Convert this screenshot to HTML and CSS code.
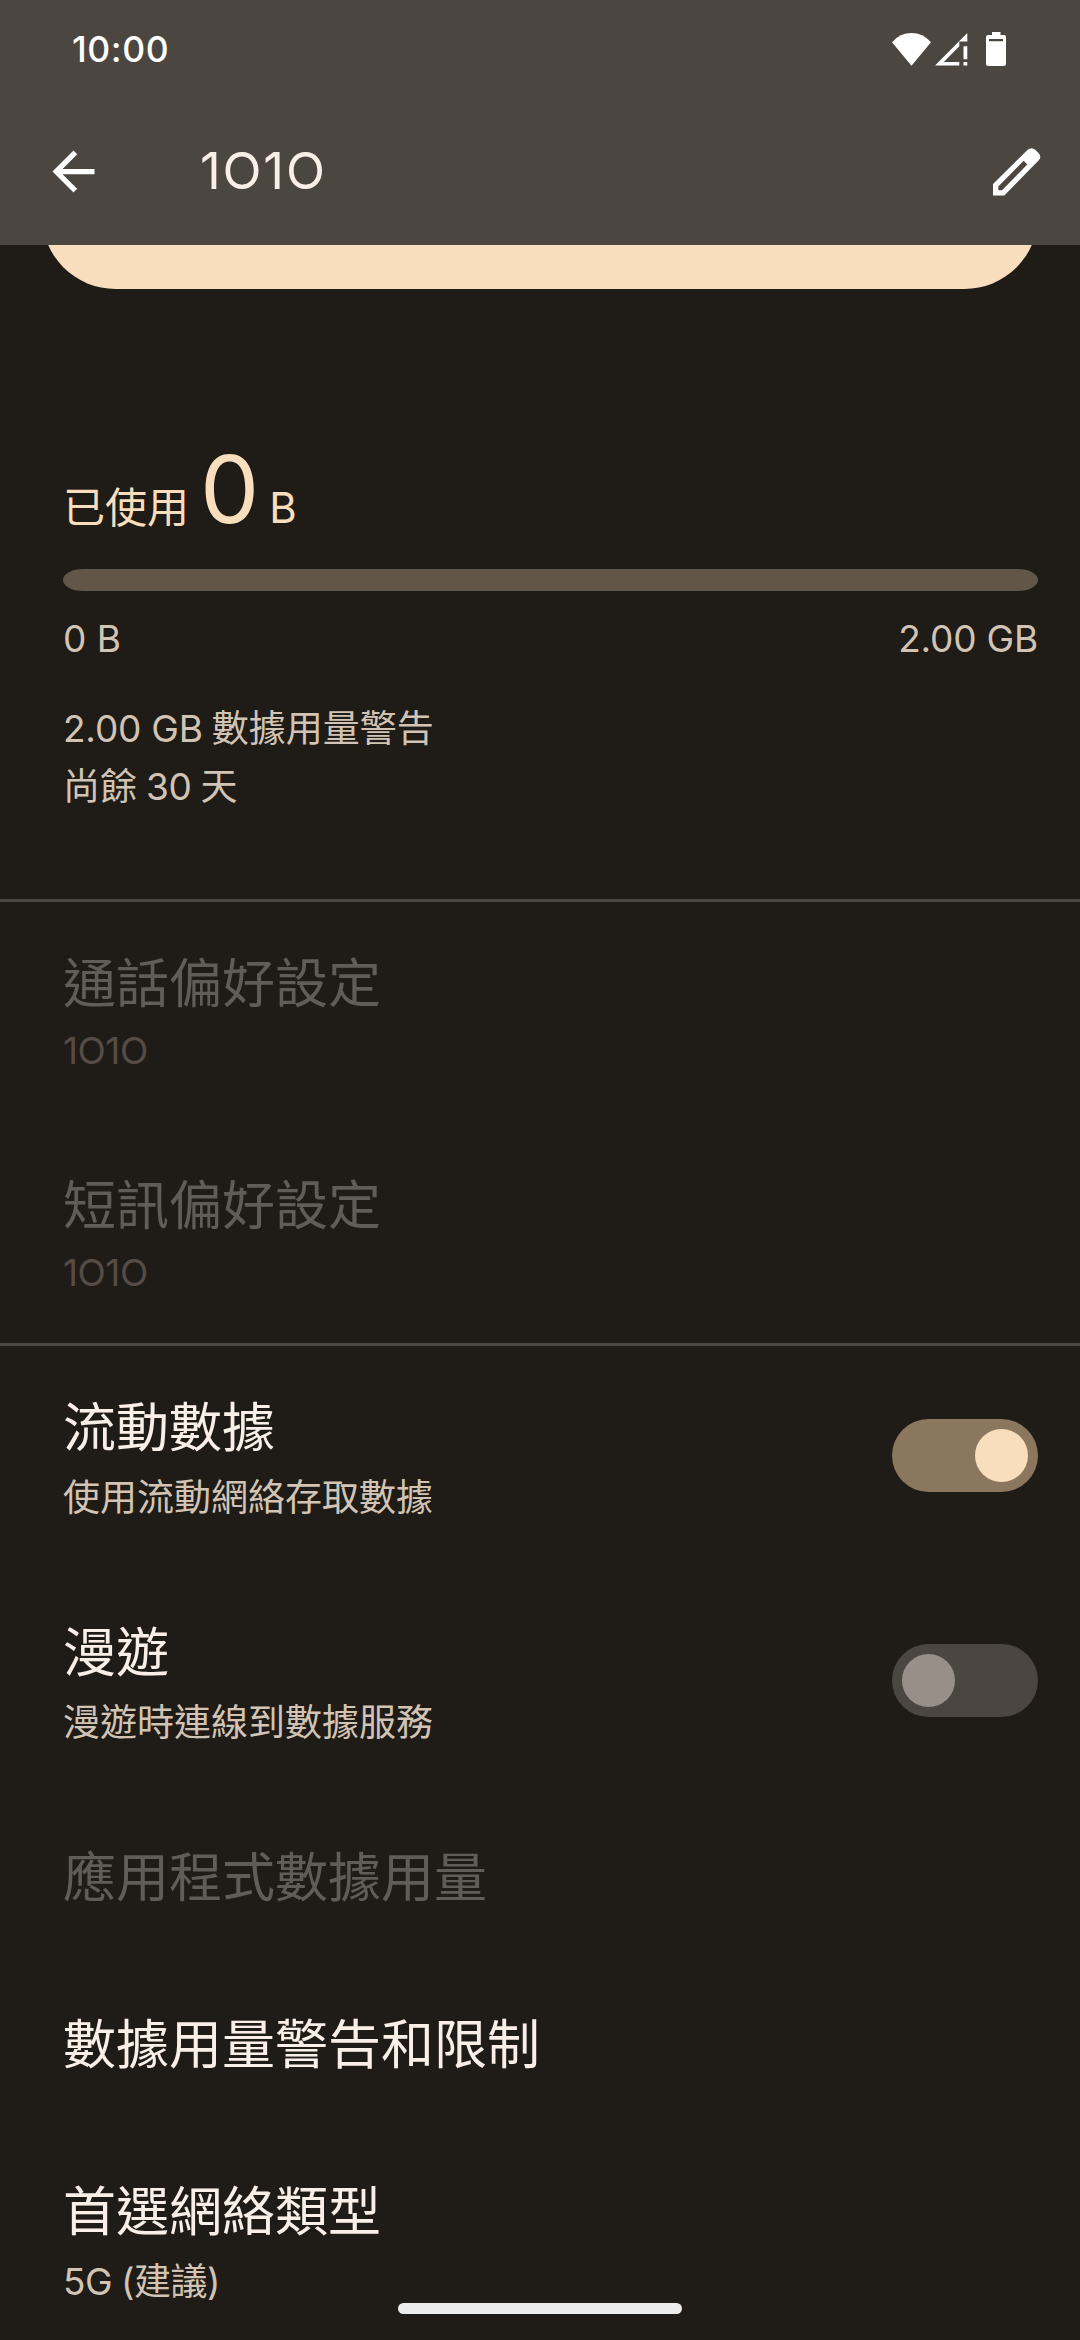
FILE: index.html
```html
<!DOCTYPE html>
<html lang="zh-Hant-HK">
<head>
<meta charset="utf-8">
<title>1O1O</title>
<link rel="stylesheet" href="styles.css">
</head>
<body>
<div class="screen">
  <header class="header">
    <div class="status">
      <span class="clock">10:00</span>
      <div class="status-icons">
        <svg class="wifi" width="39" height="33" viewBox="0 0 39 33"><path d="M0 9.2Q8 0 19.5 0T39 9.2L19.5 32.7Z" fill="#fff"/></svg>
        <svg class="signal" width="33" height="33" viewBox="0 0 33 33"><path d="M32.3 0V8.5H24.3V13.3L8.8 29H24.3V32.6H0ZM28.5 13.3H32.3V26.2H28.5ZM28.5 29H32.3V32.6H28.5Z" fill="#fff"/></svg>
        <svg class="battery" width="20" height="34" viewBox="0 0 20 34"><path fill-rule="evenodd" d="M6 0H14.5V3H18Q20 3 20 5V32Q20 34 18 34H2Q0 34 0 32V5Q0 3 2 3H6ZM3 7V9.2H17V7Z" fill="#fff"/></svg>
      </div>
    </div>
    <div class="toolbar">
      <svg class="back" width="63" height="63" viewBox="0 0 24 24"><path d="M20 11H7.83l5.59-5.59L12 4l-8 8 8 8 1.41-1.41L7.83 13H20v-2z" fill="#fff"/></svg>
      <h1 class="page-title">1O1O</h1>
      <svg class="edit" width="48" height="48" viewBox="0 0 48 48"><path fill-rule="evenodd" d="M0 36L34.7 1.8Q38.5-1.4 42.3 1.8L45.5 5Q49 8.6 45.8 12.2L11.3 47.5H0ZM5.3 38.5V42.2H9L34.3 16.5L30.7 12.8Z" fill="#fff"/></svg>
    </div>
  </header>
  <main>
    <div class="card-clip"><div class="card"></div></div>
    <section class="usage">
      <div class="used"><span>已使用</span><span class="amount">0</span><span>B</span></div>
      <div class="bar"></div>
      <div class="range"><span>0 B</span><span class="latin">2.00 GB</span></div>
      <p class="note"><span class="latin">2.00 GB</span> 數據用量警告<br>尚餘 <span class="latin">30</span> 天</p>
    </section>
    <section class="group">
      <div class="row short disabled"><div><h2>通話偏好設定</h2><p class="brand">1O1O</p></div></div>
      <div class="row short disabled"><div><h2>短訊偏好設定</h2><p class="brand">1O1O</p></div></div>
    </section>
    <section class="group">
      <div class="row"><div><h2>流動數據</h2><p>使用流動網絡存取數據</p></div><div class="switch on"><i></i></div></div>
      <div class="row"><div><h2>漫遊</h2><p>漫遊時連線到數據服務</p></div><div class="switch"><i></i></div></div>
      <div class="row single disabled"><h2>應用程式數據用量</h2></div>
      <div class="row single"><h2>數據用量警告和限制</h2></div>
      <div class="row"><div><h2>首選網絡類型</h2><p class="mode">5G (建議)</p></div></div>
    </section>
  </main>
  <div class="home-pill"></div>
</div>
</body>
</html>
```
FILE: styles.css
```css
* { box-sizing: border-box; margin: 0; padding: 0; }
body { background: #1f1b16; }
svg { display: block; }
.screen {
  position: relative;
  width: 1080px;
  height: 2340px;
  overflow: hidden;
  background: #1f1b16;
  color: #f9efe7;
  font-family: Inter, "Noto Sans CJK TC", sans-serif;
}
.header { height: 245px; background: #4c4641; }
.status {
  height: 98px;
  padding: 0 74px 0 72px;
  display: flex;
  justify-content: space-between;
  align-items: center;
}
.clock { font-size: 35.5px; font-weight: 500; color: #fff; letter-spacing: 0.6px; }
.status-icons { display: flex; align-items: center; }
.signal { margin-left: 4px; }
.battery { margin-left: 18px; }
.toolbar { height: 147px; padding: 0 39px 0 42px; display: flex; align-items: center; }
.page-title {
  flex: 1;
  margin: -2px 0 0 95px;
  font-size: 51px;
  font-weight: 400;
  line-height: 60px;
  letter-spacing: 1.8px;
}
.card-clip { height: 44px; padding: 0 42px; overflow: hidden; display: flex; align-items: flex-end; }
.card { flex: none; width: 996px; height: 147px; border-radius: 73.5px; background: #f8debd; }
.usage { height: 610px; padding: 142px 42px 0 63px; color: #d2c4b4; }
.used { height: 138px; display: flex; align-items: baseline; font-size: 42px; line-height: 116px; color: #f8debd; }
.amount { margin: 0 10px 0 11px; font-size: 94px; }
.bar { height: 22px; border-radius: 20px / 11px; background: #625649; }
.range { display: flex; justify-content: space-between; font-size: 37px; line-height: 58px; margin-top: 19px; }
.note { font-size: 37px; line-height: 58px; margin-top: 32px; word-spacing: -1.5px; }
.latin { letter-spacing: -0.2px; word-spacing: 0; }
.group { border-top: 3px solid #4b4742; }
.row { height: 225px; padding: 49px 42px 0 63px; display: flex; justify-content: space-between; }
.row.short { height: 222px; }
.row:first-child { padding-top: 46px; }
.row.short:first-child { height: 219px; }
.row:not(.short):first-child { height: 222px; }
.row.row.single { height: 167px; }
h2 { font-size: 53px; font-weight: 400; line-height: 72px; white-space: nowrap; }
.row p { margin-top: 4px; font-size: 37px; line-height: 60px; color: #d2c4b4; }
.row .brand { margin-top: 1px; letter-spacing: -0.5px; }
.row .mode { letter-spacing: -0.5px; word-spacing: -1px; }
.disabled h2 { color: #605c57; }
.row.disabled p { color: #554d45; }
.switch { width: 146px; height: 73px; margin-top: 27px; padding: 10px; border-radius: 37px; background: #4c4641; display: flex; }
.switch i { width: 53px; height: 53px; border-radius: 50%; background: #998f89; }
.switch.on { background: #8b775d; justify-content: flex-end; }
.switch.on i { background: #f8debd; }
.home-pill { position: absolute; left: 398px; top: 2303px; width: 284px; height: 11px; border-radius: 5.5px; background: #ececec; }
```
